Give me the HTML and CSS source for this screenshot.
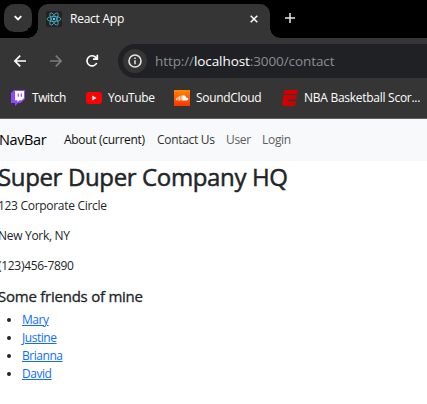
FILE: index.html
```html
<!DOCTYPE html>
<html lang="en">
<head>
<meta charset="utf-8">
<title>React App</title>
<link rel="stylesheet" href="styles.css">
</head>
<body>
<header class="browser">
  <div class="tabs">
    <button class="tab-search" aria-label="Search tabs"><svg width="10" height="8" viewBox="0 0 10 8"><path d="M1.7 2.2 5 5.5l3.3-3.3" fill="none" stroke="#fff" stroke-width="1.8"/></svg></button>
    <div class="tab">
      <span class="favicon"><svg width="16" height="16" viewBox="0 0 16 16" fill="none" stroke="#4db5d0" stroke-width=".8"><ellipse cx="8" cy="8" rx="6.9" ry="2.6"/><ellipse cx="8" cy="8" rx="6.9" ry="2.6" transform="rotate(60 8 8)"/><ellipse cx="8" cy="8" rx="6.9" ry="2.6" transform="rotate(120 8 8)"/><circle cx="8" cy="8" r="1.2" fill="#61dafb" stroke="none"/></svg></span>
      <span class="tab-title">React App</span>
      <svg class="close" width="8" height="8" viewBox="0 0 8 8"><path d="m.7.7 6.6 6.6m0-6.6L.7 7.3" stroke="#fff" stroke-width="1.5"/></svg>
    </div>
    <svg class="plus" width="10" height="10" viewBox="0 0 10 10"><path d="M5 0v10M0 5h10" stroke="#e8e8e8" stroke-width="1.5"/></svg>
  </div>
  <div class="toolbar">
    <svg class="nav-icon" width="14" height="14" viewBox="0 0 14 14"><path d="M13 7H2M7.2 1.7 1.9 7l5.3 5.3" fill="none" stroke="#fff" stroke-width="1.7"/></svg>
    <svg class="nav-icon" width="14" height="14" viewBox="0 0 14 14"><path d="M1 7h11M6.8 1.7 12.1 7l-5.3 5.3" fill="none" stroke="#7b7b7b" stroke-width="1.7"/></svg>
    <svg class="nav-icon" width="14" height="14" viewBox="0 0 14 14"><path d="M11.7 9A5.1 5.1 0 1 1 11 3.6l1.2 1.3M12.3.8v4.4H8" fill="none" stroke="#fff" stroke-width="1.7"/></svg>
    <div class="address">
      <span class="info"><svg width="14" height="14" viewBox="0 0 14 14"><circle cx="7" cy="7" r="6" fill="none" stroke="#e4e4e4" stroke-width="1.6"/><path d="M7 6.2v4M7 3.5v1.6" stroke="#e4e4e4" stroke-width="1.5"/></svg></span>
      <span class="url">http://<b>localhost</b>:3000/contact</span>
    </div>
  </div>
  <div class="bookmarks">
    <svg class="mark" width="14" height="16" viewBox="0 0 14 16"><path d="M3 0h11v9l-4.5 4H7l-3 3v-3H0V3z" fill="#9146ff"/><path d="M4 1h9v7l-2.2 2.2H8.5l-2 2v-2H4z" fill="#fff"/><path d="M7.3 3.5v3.3M10.3 3.5v3.3" stroke="#9146ff" stroke-width="1.2"/></svg>
    <span class="label twitch">Twitch</span>
    <svg class="mark" width="16" height="12" viewBox="0 0 16 12"><rect width="16" height="12" rx="3" fill="#f00"/><path d="m6.3 3.4 4.2 2.6-4.2 2.6z" fill="#fff"/></svg>
    <span class="label youtube">YouTube</span>
    <span class="cloud"><svg width="16" height="16" viewBox="0 0 16 16"><path d="M2.4 8.2v2.1M4 6.8v3.7M5.6 6.2v4.3M7.2 5.5v5" stroke="#fff" stroke-width=".9"/><path d="M8.2 10.5V5.6c2-.8 3.9.3 4.1 2.1 1.3-.1 2 .6 2 1.4s-.6 1.4-1.5 1.4z" fill="#fff"/></svg></span>
    <span class="label soundcloud">SoundCloud</span>
    <svg class="mark" width="16" height="16" viewBox="0 0 16 16"><path d="M2.3 0H16l-.8 4H1.6zM1.4 5H15l-.8 4.5H6.6l-.3 1.7h7.6l-.8 4.8H0z" fill="#d00000"/></svg>
    <span class="label nba">NBA Basketball Scor...</span>
  </div>
</header>
<nav class="navbar">
  <a class="brand">NavBar</a>
  <a class="link about">About (current)</a>
  <a class="link contact">Contact Us</a>
  <a class="link user">User</a>
  <a class="link login">Login</a>
</nav>
<main>
  <h2>Super Duper Company HQ</h2>
  <p class="street">123 Corporate Circle</p>
  <p class="city">New York, NY</p>
  <p class="phone">(123)456-7890</p>
  <h5>Some friends of mine</h5>
  <ul>
    <li><a href="#">Mary</a></li>
    <li><a href="#">Justine</a></li>
    <li><a href="#">Brianna</a></li>
    <li><a href="#">David</a></li>
  </ul>
</main>
</body>
</html>
```
FILE: styles.css
```css
* { box-sizing: border-box; }
body { margin: 0; background: #fff; color: #212529; font: 12px/18px "Open Sans", "Noto Sans", sans-serif; overflow: hidden; white-space: nowrap; }
svg { display: block; flex: none; }
span, a { flex: none; }
.browser { height: 119px; background: #353535; border-bottom: 1px solid #606060; color: #fff; }
.tabs { height: 38px; background: #000; display: flex; align-items: flex-start; padding: 4px 0 0 4px; }
.tab-search { width: 28px; height: 28px; padding: 0; border: 0; border-radius: 10px; background: #353535; display: flex; align-items: center; justify-content: center; }
.tab { position: relative; width: 232px; height: 34px; margin-left: 6px; padding: 0 12px 5px 8px; background: #353535; border-radius: 10px 10px 0 0; display: flex; align-items: center; }
.tab::before, .tab::after { content: ""; position: absolute; bottom: 0; width: 10px; height: 10px; }
.tab::before { left: -10px; background: radial-gradient(circle at 0 0, #000 9.5px, #353535 10px); }
.tab::after { right: -10px; background: radial-gradient(circle at 100% 0, #000 9.5px, #353535 10px); }
.favicon { width: 16px; height: 16px; border-radius: 2px; background: #222; }
.tab-title { margin-left: 8px; letter-spacing: -.25px; }
.close { margin-left: auto; }
.plus { margin: 9px 0 0 15px; }
.toolbar { height: 40px; display: flex; align-items: flex-end; padding-left: 13px; }
.nav-icon { margin: 0 22px 10px 0; }
.address { flex: 1; height: 34px; margin-left: -3px; padding-left: 5px; border-radius: 17px 0 0 17px; background: #202124; display: flex; align-items: center; }
.info { width: 24px; height: 24px; border-radius: 50%; background: #353535; display: flex; align-items: center; justify-content: center; }
.url { margin-left: 8px; color: #8b8d90; font-size: 13.5px; letter-spacing: -.09px; }
.url b { color: #fff; font-weight: 400; }
.bookmarks { height: 40px; display: flex; align-items: center; padding-left: 11px; }
.label { margin-left: 7px; letter-spacing: -.2px; }
.twitch { width: 54px; letter-spacing: -.4px; }
.youtube { margin-left: 6px; width: 66px; letter-spacing: -.4px; }
.cloud { background: linear-gradient(#ff8800, #ff3300); }
.soundcloud { margin-left: 6px; width: 86px; letter-spacing: -.3px; }
.nba { margin-left: 6px; letter-spacing: -.27px; }
.navbar { height: 42px; background: #f8f9fa; display: flex; align-items: center; padding-bottom: 1px; }
.brand { width: 65px; margin-left: -1px; color: #000; font-size: 14.5px; letter-spacing: -.4px; }
.link { color: #5c5d5e; letter-spacing: -.3px; padding-top: 1px; }
.about { width: 93px; color: #111; }
.contact { width: 69px; color: #333; }
.user { width: 36px; }
main { padding-top: 1px; margin-left: -2px; }
h2, h5 { font-weight: 400; margin: 0 0 6px; -webkit-text-stroke: .5px #212529; }
h2 { font-size: 24px; line-height: 29px; letter-spacing: -.36px; }
h5 { font-size: 15px; line-height: 18px; letter-spacing: -.24px; -webkit-text-stroke-width: .3px; }
p { margin: 0 0 12px; letter-spacing: -.3px; }
ul { margin: 0; padding-left: 24px; }
li a { color: #0d6efd; letter-spacing: -.45px; }
```
